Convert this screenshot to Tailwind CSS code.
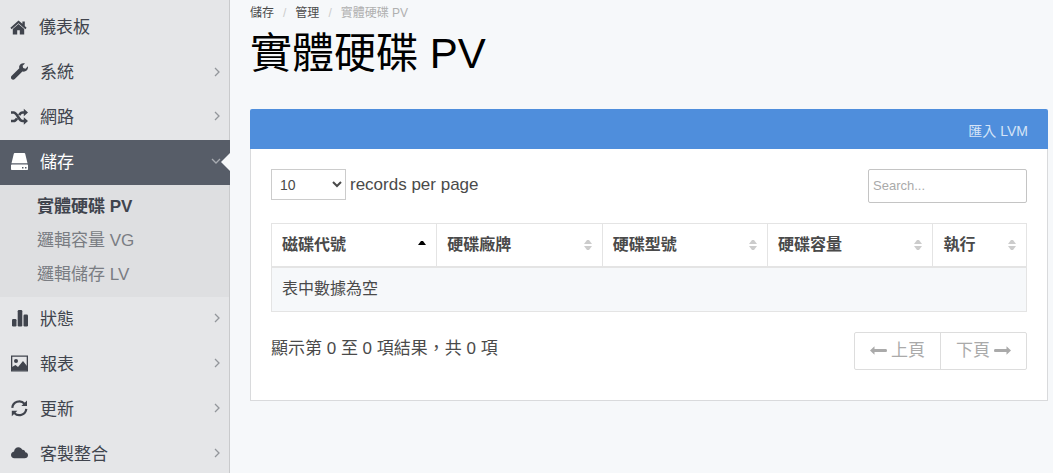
<!DOCTYPE html>
<html lang="zh-Hant">
<head>
    <meta charset="UTF-8">
    <meta name="viewport" content="width=device-width, initial-scale=1">
    <title>實體硬碟 PV</title>
    <script src="https://cdn.jsdelivr.net/npm/@tailwindcss/browser@4"></script>
</head>
<body class="flex h-screen overflow-hidden bg-[#f6f8fa] font-['Liberation_Sans','Noto_Sans_CJK_TC',sans-serif] text-base text-[#4a4a4a]">

    <!-- sidebar -->
    <nav class="w-[230px] shrink-0 overflow-hidden bg-[#e5e6e8] pt-[5px] text-[17px] text-[#40444d] shadow-[inset_-1px_0_0_#c9cacc]">
        <ul>
            <li>
                <a href="#" class="flex h-[45px] items-center gap-3 pr-2 pl-[10px]">
                    <svg class="size-[17px]" viewBox="0 0 17 17" fill="currentColor"><path d="M8.500 1.500.4 8.700l1.200 1.500 6.900-6 6.900 6 1.200-1.500-1.800-1.600V2.500h-2.400v2.200z"/><path d="M8.500 5 2.800 10v5.500h4.400v-4.200h2.600v4.200h4.400V10z"/></svg>
                    <span class="flex-1">儀表板</span>
                </a>
            </li>
            <li>
                <a href="#" class="flex h-[45px] items-center gap-3 pr-2 pl-[11px]">
                    <svg class="mb-0.5 size-[17px]" viewBox="0 0 17 17" fill="currentColor"><path d="M16.900 3.300 14.500 5.700l-2.300-.6-.6-2.300L14 .5C11.700-.5 9 .6 8.300 3c-.2.800-.2 1.500 0 2.200L.7 12.800c-1 .9-1 2.300-.2 3.200.9 1 2.400 1 3.300 0l7.600-7.500c3.300.8 6.200-1.800 5.500-5.200z"/></svg>
                    <span class="flex-1">系統</span>
                    <svg class="mb-0.5 h-[10px] w-[10px] text-[#93969b]" viewBox="0 0 10 10" fill="none" stroke="currentColor" stroke-width="1.300"><path d="M3 1l4 4-4 4"/></svg>
                </a>
            </li>
            <li>
                <a href="#" class="flex h-[45px] items-center gap-3 pr-2 pl-[11px]">
                    <svg class="mb-0.5 size-[17px]" viewBox="0 0 17 17" fill="none" stroke="currentColor" stroke-width="2.600"><path d="M0 4.500h2.500C6.500 4.500 7.500 13 11.500 13H14M0 13h2.500c1.600 0 2.700-1.200 3.500-2.700M8.200 7.200C9 5.700 10 4.500 11.500 4.500H14"/><path d="M12.800.8v7.400L17 4.500zM12.800 9.300v7.400L17 13z" fill="currentColor" stroke="none"/></svg>
                    <span class="flex-1">網路</span>
                    <svg class="mb-[3px] h-[10px] w-[10px] text-[#93969b]" viewBox="0 0 10 10" fill="none" stroke="currentColor" stroke-width="1.300"><path d="M3 1l4 4-4 4"/></svg>
                </a>
            </li>
            <li>
                <a href="#" class="relative flex h-[45px] items-center gap-3 bg-[#575d68] pr-[9px] pl-[11px] text-white">
                    <svg class="mb-[3px] size-[17px]" viewBox="0 0 17 17" fill="currentColor"><path d="M3.700 0h9.600c.5 0 .8.200.9.700L16.500 10.200H.5L2.800.7c.1-.5.400-.7.900-.7z"/><path fill-rule="evenodd" d="M.8 11.500h15.400c.5 0 .8.300.8.800v3.900c0 .5-.3.800-.8.800H.8c-.5 0-.8-.3-.8-.8v-3.900c0-.5.300-.8.800-.8zM11 14v1.500h1.500V14zm3 0v1.500h1.500V14z"/></svg>
                    <span class="flex-1">儲存</span>
                    <svg class="mb-[3px] h-[10px] w-[10px] text-[#a9acb2]" viewBox="0 0 10 10" fill="none" stroke="currentColor" stroke-width="1.300"><path d="M1 3l4 4 4-4"/></svg>
                    <svg class="absolute top-[13px] right-0 h-[18px] w-[9px] text-[#f6f8fa]" viewBox="0 0 9 18" fill="currentColor"><path d="M9 0v18L0 9z"/></svg>
                </a>
                <ul class="mr-px bg-[#dedfe1] py-[5px] pl-[37px] text-[#7a7d83]">
                    <li><a href="#" class="flex h-[34px] items-center font-bold text-[#40444d]">實體硬碟 PV</a></li>
                    <li><a href="#" class="flex h-[34px] items-center">邏輯容量 VG</a></li>
                    <li><a href="#" class="flex h-[34px] items-center">邏輯儲存 LV</a></li>
                </ul>
            </li>
            <li>
                <a href="#" class="flex h-[45px] items-center gap-3 pr-2 pl-[11px]">
                    <svg class="mb-0.5 size-[17px]" viewBox="0 0 17 17" fill="currentColor"><rect x="1" y="9" width="4.500" height="7.500" rx="1.200"/><rect x="6.700" y="0" width="4.600" height="16.500" rx="1.200"/><rect x="12.500" y="4.500" width="4.500" height="12" rx="1.200"/></svg>
                    <span class="flex-1">狀態</span>
                    <svg class="mb-[3px] h-[10px] w-[10px] text-[#93969b]" viewBox="0 0 10 10" fill="none" stroke="currentColor" stroke-width="1.300"><path d="M3 1l4 4-4 4"/></svg>
                </a>
            </li>
            <li>
                <a href="#" class="flex h-[45px] items-center gap-3 pr-2 pl-[11px]">
                    <svg class="mb-0.5 size-[17px]" viewBox="0 0 17 17" fill="currentColor"><path fill-rule="evenodd" d="M0 .5h17v16H0zM1.300 1.800v13.400h14.400V1.800z"/><circle cx="5" cy="6" r="2"/><path d="M1 15.500v-3.500l3.500-2 2.500 2L12 6l4 5v4.500z"/></svg>
                    <span class="flex-1">報表</span>
                    <svg class="mb-[3px] h-[10px] w-[10px] text-[#93969b]" viewBox="0 0 10 10" fill="none" stroke="currentColor" stroke-width="1.300"><path d="M3 1l4 4-4 4"/></svg>
                </a>
            </li>
            <li>
                <a href="#" class="flex h-[45px] items-center gap-3 pr-2 pl-[11px]">
                    <svg class="mb-0.5 size-[17px]" viewBox="0 0 17 17" fill="none" stroke="currentColor" stroke-width="2.200"><path d="M1.300 7.800A7 7 0 0 1 13.500 3.700M15.300 8.800A7 7 0 0 1 3.300 13"/><path d="M16 .5V6h-5.700zM.8 16.300v-5.600h5.600z" fill="currentColor" stroke="none"/></svg>
                    <span class="flex-1">更新</span>
                    <svg class="mb-[3px] h-[10px] w-[10px] text-[#93969b]" viewBox="0 0 10 10" fill="none" stroke="currentColor" stroke-width="1.300"><path d="M3 1l4 4-4 4"/></svg>
                </a>
            </li>
            <li>
                <a href="#" class="flex h-[45px] items-center gap-3 pr-2 pl-[11px]">
                    <svg class="mb-0.5 size-[17px]" viewBox="0 0 17 17" fill="currentColor"><path d="M14.300 7.300C14.100 5.500 12.900 4.600 11.300 4.800 10.500 3 9.200 2.200 7.500 2.200 5 2.200 3.200 4 3.100 6.600 1.200 7 0 8.300 0 10c0 1.900 1.400 3.300 3.400 3.300h10.200c2 0 3.400-1.300 3.400-3.100 0-1.500-1.100-2.700-2.700-2.900z"/></svg>
                    <span class="flex-1">客製整合</span>
                    <svg class="mb-[3px] h-[10px] w-[10px] text-[#93969b]" viewBox="0 0 10 10" fill="none" stroke="currentColor" stroke-width="1.300"><path d="M3 1l4 4-4 4"/></svg>
                </a>
            </li>
        </ul>
    </nav>

    <main class="min-w-0 flex-1 pt-1 pr-[5px] pl-5">
        <ol class="flex h-[18px] items-center text-xs">
            <li><a href="#">儲存</a></li>
            <li class="px-[9px] text-[#cccccc]">/</li>
            <li><a href="#">管理</a></li>
            <li class="px-[9px] text-[#cccccc]">/</li>
            <li class="text-[#b0b0b0]">實體硬碟 PV</li>
        </ol>
        <h1 class="mb-[23px] text-[42px] leading-[64px] text-black">實體硬碟 PV</h1>

        <section>
            <header class="flex h-10 items-center justify-end rounded-t-xs bg-[#4f8edc] px-5 pt-1 text-sm text-[#d5e4f7]">
                <a href="#">匯入 LVM</a>
            </header>
            <div class="border border-t-0 border-[#d9dadc] bg-white px-5 pt-5 pb-[30px]">
                <div class="mb-5 flex items-start justify-between">
                    <label class="flex items-center gap-1 text-[17px]">
                        <select class="h-[31px] w-[75px] border border-[#cccccc] bg-white px-1 text-sm">
                            <option>10</option>
                            <option>25</option>
                            <option>50</option>
                            <option>100</option>
                        </select>
                        records per page
                    </label>
                    <input type="search" aria-label="Search" placeholder="Search..." class="h-[34px] w-[159px] rounded-xs border border-[#c4c4c4] bg-white px-1 pb-0.5 text-[13px] placeholder:text-[#aaaaaa]">
                </div>

                <table class="mb-5 w-full table-fixed border-collapse border border-[#e4e4e4] text-left">
                    <colgroup>
                        <col class="w-[21.9%]">
                        <col class="w-[21.9%]">
                        <col class="w-[21.9%]">
                        <col class="w-[21.9%]">
                        <col>
                    </colgroup>
                    <thead>
                        <tr class="h-[43px] border-b-2 border-[#e4e4e4]">
                            <th class="border-r border-[#e4e4e4] px-[10px]">
                                <div class="flex items-center justify-between">磁碟代號 <svg class="h-3 w-2" viewBox="0 0 8 12" fill="#000"><path d="M0 6h8L5 2H3z"/></svg></div>
                            </th>
                            <th class="border-r border-[#e4e4e4] px-[10px]">
                                <div class="flex items-center justify-between">硬碟廠牌 <svg class="h-3 w-2" viewBox="0 0 8 12" fill="#ccc"><path d="M0 5h8L5 1H3zM0 7h8l-3 4H3z"/></svg></div>
                            </th>
                            <th class="border-r border-[#e4e4e4] px-[10px]">
                                <div class="flex items-center justify-between">硬碟型號 <svg class="h-3 w-2" viewBox="0 0 8 12" fill="#ccc"><path d="M0 5h8L5 1H3zM0 7h8l-3 4H3z"/></svg></div>
                            </th>
                            <th class="border-r border-[#e4e4e4] px-[10px]">
                                <div class="flex items-center justify-between">硬碟容量 <svg class="h-3 w-2" viewBox="0 0 8 12" fill="#ccc"><path d="M0 5h8L5 1H3zM0 7h8l-3 4H3z"/></svg></div>
                            </th>
                            <th class="px-[10px]">
                                <div class="flex items-center justify-between">執行 <svg class="h-3 w-2" viewBox="0 0 8 12" fill="#ccc"><path d="M0 5h8L5 1H3zM0 7h8l-3 4H3z"/></svg></div>
                            </th>
                        </tr>
                    </thead>
                    <tbody>
                        <tr class="h-[45px] bg-[#f6f8fa]">
                            <td colspan="5" class="px-[10px]">表中數據為空</td>
                        </tr>
                    </tbody>
                </table>

                <div class="flex items-start justify-between text-[17px]">
                    <p class="leading-[34px]">顯示第 0 至 0 項結果，共 0 項</p>
                    <div class="flex h-[38px] rounded-xs border border-[#dddddd] text-[#aaaaaa]">
                        <button type="button" class="flex w-[86px] items-center justify-center gap-1 border-r border-[#dddddd]">
                            <svg class="mb-0.5 h-[17px] w-[17px]" viewBox="0 0 17 17" fill="currentColor"><path d="M0 8.500 4.500 4.300v2.700H16q1 0 1 1.500t-1 1.500H4.500v2.700z"/></svg>
                            上頁
                        </button>
                        <button type="button" class="flex w-[85px] items-center justify-center gap-1">
                            下頁
                            <svg class="mb-0.5 h-[17px] w-[17px]" viewBox="0 0 17 17" fill="currentColor"><path d="M17 8.500 12.500 4.300v2.700H1Q0 7 0 8.500t1 1.500h11.500v2.700z"/></svg>
                        </button>
                    </div>
                </div>
            </div>
        </section>
    </main>

</body>
</html>
